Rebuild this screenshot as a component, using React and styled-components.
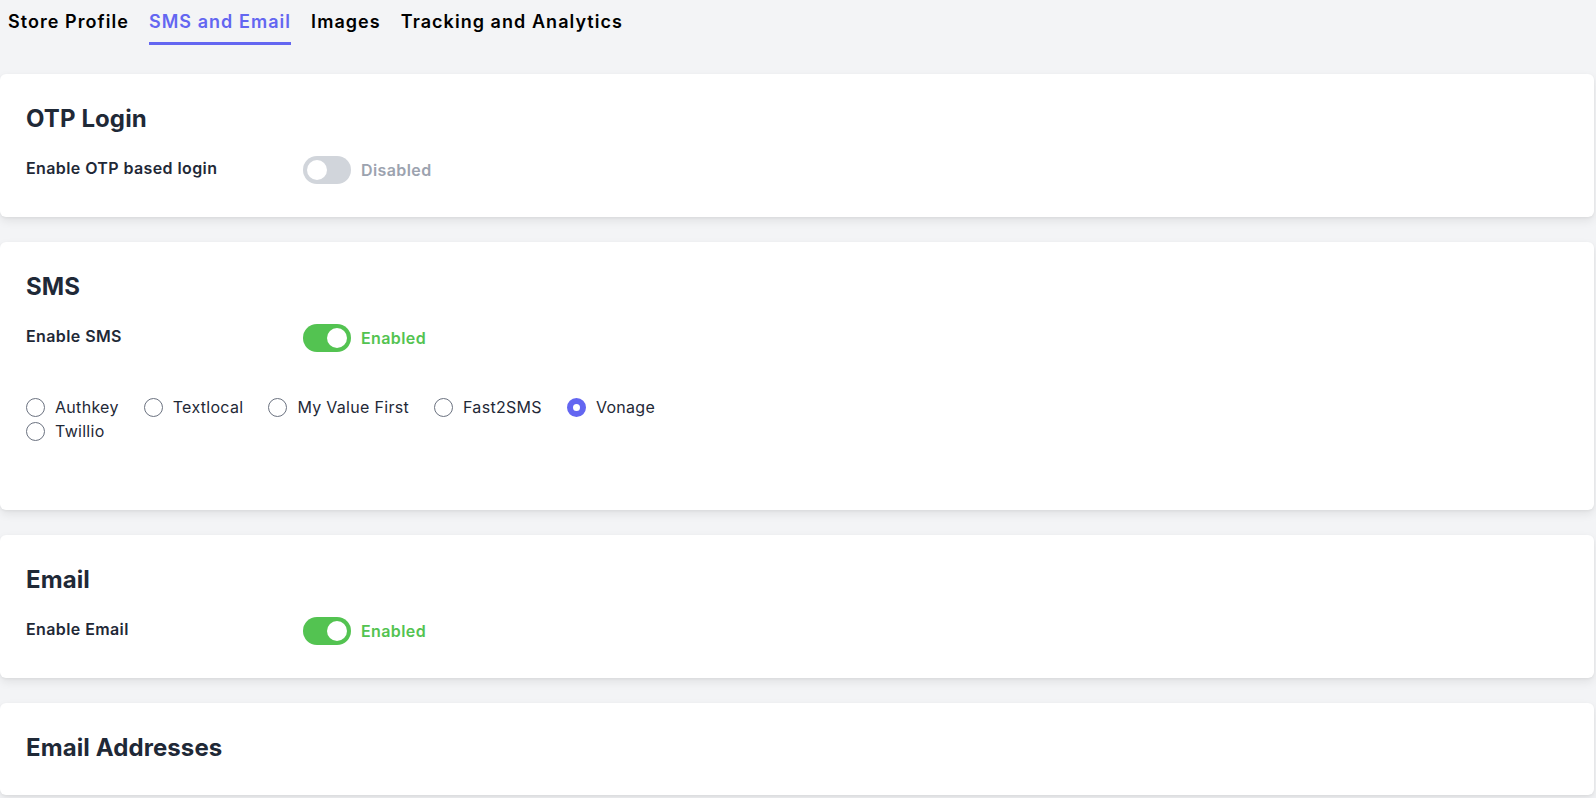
import styled, { createGlobalStyle } from "styled-components";
import { useState } from "react";

const GlobalStyle = createGlobalStyle`
    html, body {
        margin: 0;
        padding: 0;
        background-color: #f3f4f6;
        font-family: Inter, "Noto Sans", sans-serif;
    }
    * {
        box-sizing: border-box;
    }
`

const tabs = ["Store Profile", "SMS and Email", "Images", "Tracking and Analytics"]
const providers = ["Authkey", "Textlocal", "My Value First", "Fast2SMS", "Vonage", "Twillio"]

function Switch({ on, onToggle }) {
    return (
        <SwitchRow>
            <Track on={on} onClick={onToggle}>
                <Knob />
            </Track>
            <Status on={on}>{on ? "Enabled" : "Disabled"}</Status>
        </SwitchRow>
    )
}

function App() {
    const [otp, setOtp] = useState(false)
    const [sms, setSms] = useState(true)
    const [email, setEmail] = useState(true)
    const [provider, setProvider] = useState("Vonage")

    return (
        <Page>
            <GlobalStyle />
            <TabBar>
                {tabs.map(t => (
                    <Tab key={t} active={t === "SMS and Email"}>{t}</Tab>
                ))}
            </TabBar>

            <Cards>
                <Card>
                    <Heading>OTP Login</Heading>
                    <Row>
                        <Label>Enable OTP based login</Label>
                        <Switch on={otp} onToggle={() => setOtp(!otp)} />
                    </Row>
                </Card>

                <Card>
                    <Heading>SMS</Heading>
                    <Row>
                        <Label>Enable SMS</Label>
                        <Switch on={sms} onToggle={() => setSms(!sms)} />
                    </Row>
                    <Providers>
                        {providers.map(p => (
                            <Option key={p} onClick={() => setProvider(p)}>
                                <Radio checked={provider === p} />
                                {p}
                            </Option>
                        ))}
                    </Providers>
                </Card>

                <Card>
                    <Heading>Email</Heading>
                    <Row>
                        <Label>Enable Email</Label>
                        <Switch on={email} onToggle={() => setEmail(!email)} />
                    </Row>
                </Card>

                <Card>
                    <Heading>Email Addresses</Heading>
                </Card>
            </Cards>
        </Page>
    )
}

const Page = styled.div`
    width: 100%;
    min-height: 100vh;
    padding-right: 2px;
`
const TabBar = styled.nav`
    display: flex;
    gap: 20px;
    padding-left: 8px;
    height: 45px;
`
const Tab = styled.div`
    padding-top: 10px;
    height: 45px;
    font-size: 18px;
    font-weight: 600;
    line-height: 24px;
    letter-spacing: 1.05px;
    color: ${props => props.active ? "#6366f1" : "#000000"};
    border-bottom: 3px solid ${props => props.active ? "#6366f1" : "transparent"};
    cursor: pointer;
`
const Cards = styled.div`
    display: flex;
    flex-direction: column;
    gap: 25px;
    margin-top: 29px;
`
const Card = styled.section`
    background-color: #ffffff;
    border-radius: 6px;
    padding: 29px 26px 31px;
    box-shadow: 0 4px 10px rgba(0, 0, 0, 0.08), 0 1px 3px rgba(0, 0, 0, 0.05);
`
const Heading = styled.h2`
    margin: 0;
    font-size: 24px;
    font-weight: 700;
    line-height: 32px;
    letter-spacing: 0.1px;
    color: #1f2937;
`
const Row = styled.div`
    display: flex;
    align-items: flex-start;
    margin: 21px 0 2px;
`
const Label = styled.div`
    width: 277px;
    font-size: 16px;
    font-weight: 600;
    line-height: 24px;
    letter-spacing: 0.4px;
    color: #1f2937;
`
const SwitchRow = styled.div`
    display: flex;
    align-items: center;
    gap: 10px;
`
const Track = styled.div`
    width: 48px;
    height: 28px;
    border-radius: 14px;
    padding: 4px;
    display: flex;
    justify-content: ${props => props.on ? "flex-end" : "flex-start"};
    background-color: ${props => props.on ? "#53c351" : "#d1d5db"};
    cursor: pointer;
`
const Knob = styled.span`
    width: 20px;
    height: 20px;
    border-radius: 50%;
    background-color: #ffffff;
`
const Status = styled.span`
    font-size: 16px;
    font-weight: 600;
    line-height: 24px;
    letter-spacing: 0.4px;
    color: ${props => props.on ? "#53c351" : "#9ca3af"};
`
const Providers = styled.div`
    display: flex;
    flex-wrap: wrap;
    column-gap: 25px;
    max-width: 700px;
    margin-top: 43px;
    margin-bottom: 36px;
`
const Option = styled.label`
    display: flex;
    align-items: center;
    gap: 10px;
    font-size: 16px;
    line-height: 24px;
    letter-spacing: 0.3px;
    color: #1f2937;
    cursor: pointer;
`
const Radio = styled.span`
    width: 19px;
    height: 19px;
    border-radius: 50%;
    border: ${props => props.checked ? "6px solid #6366f1" : "1px solid #6b7280"};
    background-color: #ffffff;
`

export default App;
